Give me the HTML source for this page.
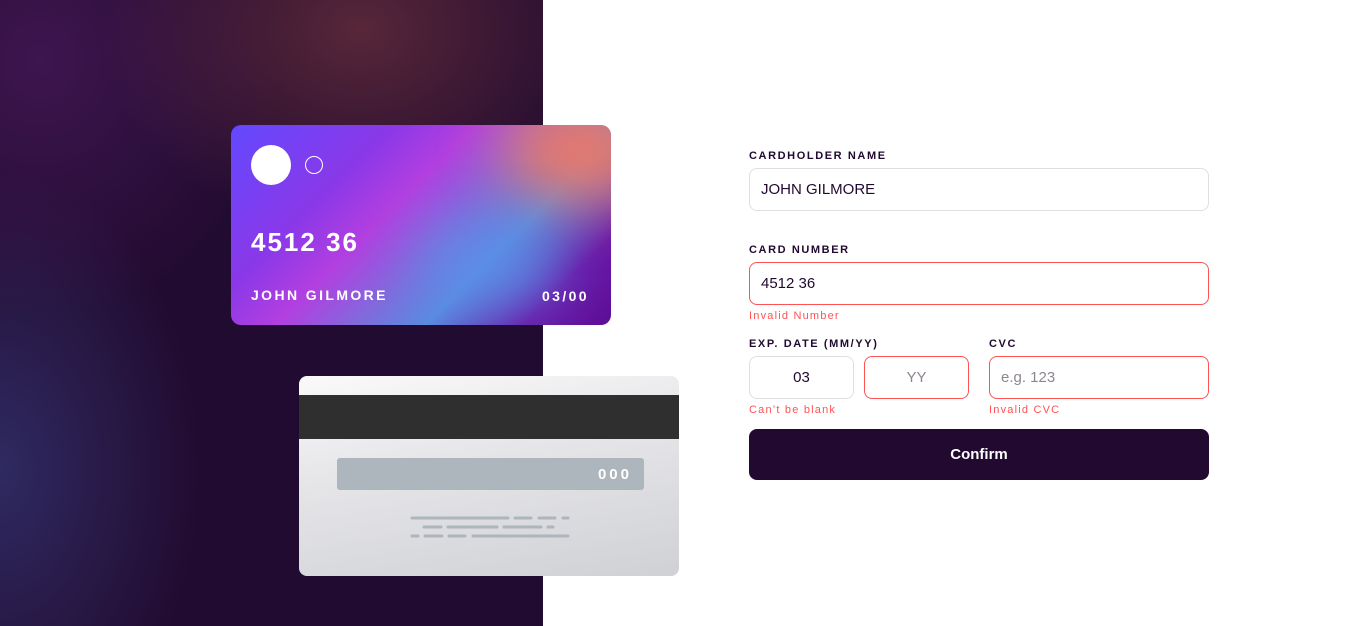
<!DOCTYPE html>
<html><head><style>
*{margin:0;padding:0;box-sizing:border-box}
body{width:1358px;height:626px;position:relative;background:#fff;font-family:"Liberation Sans",sans-serif;overflow:hidden}
.bg{position:absolute;left:0;top:0;width:543px;height:626px;overflow:hidden;background:
radial-gradient(ellipse 260px 200px at 360px 30px,rgba(110,50,60,.7),rgba(110,50,60,0)),
radial-gradient(ellipse 240px 260px at 40px 60px,rgba(80,28,100,.6),rgba(80,28,100,0)),
radial-gradient(ellipse 200px 300px at 0px 470px,rgba(50,50,110,.8),rgba(50,50,110,0)),
#220b30}
.front{position:absolute;left:231px;top:125px;width:380px;height:200px;border-radius:10px;overflow:hidden;background:linear-gradient(135deg,#6349fe 0%,#8a38e8 28%,#b23fe0 42%,#7a70dc 58%,#5a8be0 68%,#6a18a8 85%,#5e0e96 100%)}
.front .b{position:absolute;border-radius:50%;filter:blur(30px)}
.back{position:absolute;left:299px;top:376px;width:380px;height:200px;border-radius:8px;overflow:hidden;background:linear-gradient(170deg,#fafafa,#e6e6e9 40%,#d0d1d5)}
label{position:absolute;font-size:11px;letter-spacing:1.6px;font-weight:bold;color:#21092f}
.in{position:absolute;height:43px;border:1px solid #dfdee0;border-radius:8px;font-size:15px;color:#21092f;display:flex;align-items:center;padding-left:11px}
.err{border-color:#ff5252}
.em{position:absolute;font-size:11px;letter-spacing:1.2px;color:#ff5252}
</style></head><body>
<div class="bg"></div>
<div class="front">
<div class="b" style="left:270px;top:-30px;width:160px;height:110px;background:#e8786a;opacity:1"></div>
<div class="b" style="left:190px;top:100px;width:140px;height:80px;background:#5c8fe8;opacity:.8"></div>
<div style="position:absolute;left:20px;top:20px;width:40px;height:40px;border-radius:50%;background:#fff"></div>
<div style="position:absolute;left:74px;top:31px;width:18px;height:18px;border-radius:50%;border:1px solid #fff"></div>
<div style="position:absolute;left:20px;top:102px;color:#fff;font-size:26px;letter-spacing:2px;font-weight:bold">4512 36</div>
<div style="position:absolute;left:20px;top:162px;color:#fff;font-size:14px;letter-spacing:2.4px;font-weight:bold">JOHN GILMORE</div>
<div style="position:absolute;right:22px;top:163px;color:#fff;font-size:14px;letter-spacing:2.4px;font-weight:bold">03/00</div>
</div>
<div class="back">
<div style="position:absolute;left:0;top:19px;width:380px;height:44px;background:#2f2f2f"></div>
<div style="position:absolute;left:38px;top:82px;width:307px;height:32px;border-radius:3px;background:#adb5bd;color:#fff;font-size:15px;letter-spacing:3px;font-weight:bold;text-align:right;padding:8px 12px 0 0">000</div>
<svg style="position:absolute;left:0;top:0" width="380" height="200" stroke="#adb5bd" stroke-width="3" stroke-linecap="round">
<path d="M113 142H209M216 142H232M240 142H256M264 142H269M125 151H142M149 151H198M205 151H242M249 151H254M113 160H119M126 160H143M150 160H166M174 160H269"/>
</svg>
</div>
<label style="left:749px;top:150px">CARDHOLDER NAME</label>
<div class="in" style="left:749px;top:168px;width:460px">JOHN GILMORE</div>
<label style="left:749px;top:244px">CARD NUMBER</label>
<div class="in err" style="left:749px;top:262px;width:460px">4512 36</div>
<div class="em" style="left:749px;top:310px">Invalid Number</div>
<label style="left:749px;top:338px">EXP. DATE (MM/YY)</label>
<label style="left:989px;top:338px">CVC</label>
<div class="in" style="left:749px;top:356px;width:105px;justify-content:center;padding:0">03</div>
<div class="in err" style="left:864px;top:356px;width:105px;justify-content:center;padding:0;color:#8e8593">YY</div>
<div class="in err" style="left:989px;top:356px;width:220px;color:#8e8593">e.g. 123</div>
<div class="em" style="left:749px;top:404px">Can’t be blank</div>
<div class="em" style="left:989px;top:404px">Invalid CVC</div>
<div style="position:absolute;left:749px;top:429px;width:460px;height:51px;border-radius:8px;background:#21092f;color:#fff;font-size:15px;font-weight:bold;display:flex;align-items:center;justify-content:center">Confirm</div>
</body></html>
